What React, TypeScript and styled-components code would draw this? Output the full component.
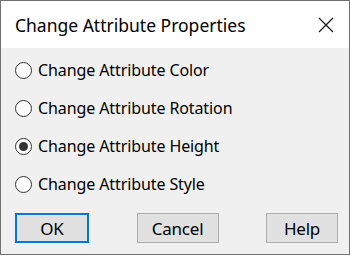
import React from "react";
import styled, { createGlobalStyle } from "styled-components";

const Global = createGlobalStyle`
  html, body { margin: 0; padding: 0; background: #ffffff; }
  * { box-sizing: border-box; }
`;

const Window = styled.div`
  width: 350px;
  height: 255px;
  border: 1px solid #707070;
  background: #f0f0f0;
  display: flex;
  flex-direction: column;
  font-family: "Noto Sans", "Open Sans", sans-serif;
  color: #000;
`;

const TitleBar = styled.div`
  height: 47px;
  background: #ffffff;
  display: flex;
  align-items: center;
  justify-content: space-between;
  padding: 0 15px 0 14px;
`;

const Title = styled.span`
  font-size: 17.5px;
  letter-spacing: 0;
  color: #000;
`;

const CloseIcon = styled.svg`
  width: 16px;
  height: 16px;
  display: block;
`;

const Body = styled.div`
  flex: 1;
  display: flex;
  flex-direction: column;
  padding: 3px 11px 0 14px;
`;

const RadioList = styled.div`
  display: flex;
  flex-direction: column;
`;

const RadioRow = styled.label`
  height: 38px;
  display: flex;
  align-items: center;
  gap: 6px;
  font-size: 16px;
  letter-spacing: -0.1px;
`;

const RadioCircle = styled.span<{ $checked?: boolean }>`
  width: 17px;
  height: 17px;
  border-radius: 50%;
  border: 1px solid #333333;
  background: #ffffff;
  display: flex;
  align-items: center;
  justify-content: center;
  flex-shrink: 0;
  &::after {
    content: "";
    width: 9px;
    height: 9px;
    border-radius: 50%;
    background: ${(p) => (p.$checked ? "#333333" : "transparent")};
  }
`;

const ButtonRow = styled.div`
  margin-top: 10px;
  display: flex;
  justify-content: space-between;
`;

const Button = styled.button<{ $w: number; $default?: boolean }>`
  width: ${(p) => p.$w}px;
  height: 30px;
  background: #e1e1e1;
  border: ${(p) => (p.$default ? "2px solid #0078d7" : "1px solid #adadad")};
  font-family: "Noto Sans", "Open Sans", sans-serif;
  font-size: 17px;
  letter-spacing: -0.2px;
  color: #000;
  padding: 0;
  display: flex;
  align-items: center;
  justify-content: center;
`;

const options = [
  "Change Attribute Color",
  "Change Attribute Rotation",
  "Change Attribute Height",
  "Change Attribute Style",
];

export default function App() {
  const selected = 2;
  return (
    <>
      <Global />
      <Window>
        <TitleBar>
          <Title>Change Attribute Properties</Title>
          <CloseIcon viewBox="0 0 16 16">
            <path d="M1 1 L15 15 M15 1 L1 15" stroke="#1a1a1a" strokeWidth="1.3" fill="none" />
          </CloseIcon>
        </TitleBar>
        <Body>
          <RadioList>
            {options.map((o, i) => (
              <RadioRow key={o}>
                <RadioCircle $checked={i === selected} />
                {o}
              </RadioRow>
            ))}
          </RadioList>
          <ButtonRow>
            <Button $w={74} $default>OK</Button>
            <Button $w={82}>Cancel</Button>
            <Button $w={72}>Help</Button>
          </ButtonRow>
        </Body>
      </Window>
    </>
  );
}
